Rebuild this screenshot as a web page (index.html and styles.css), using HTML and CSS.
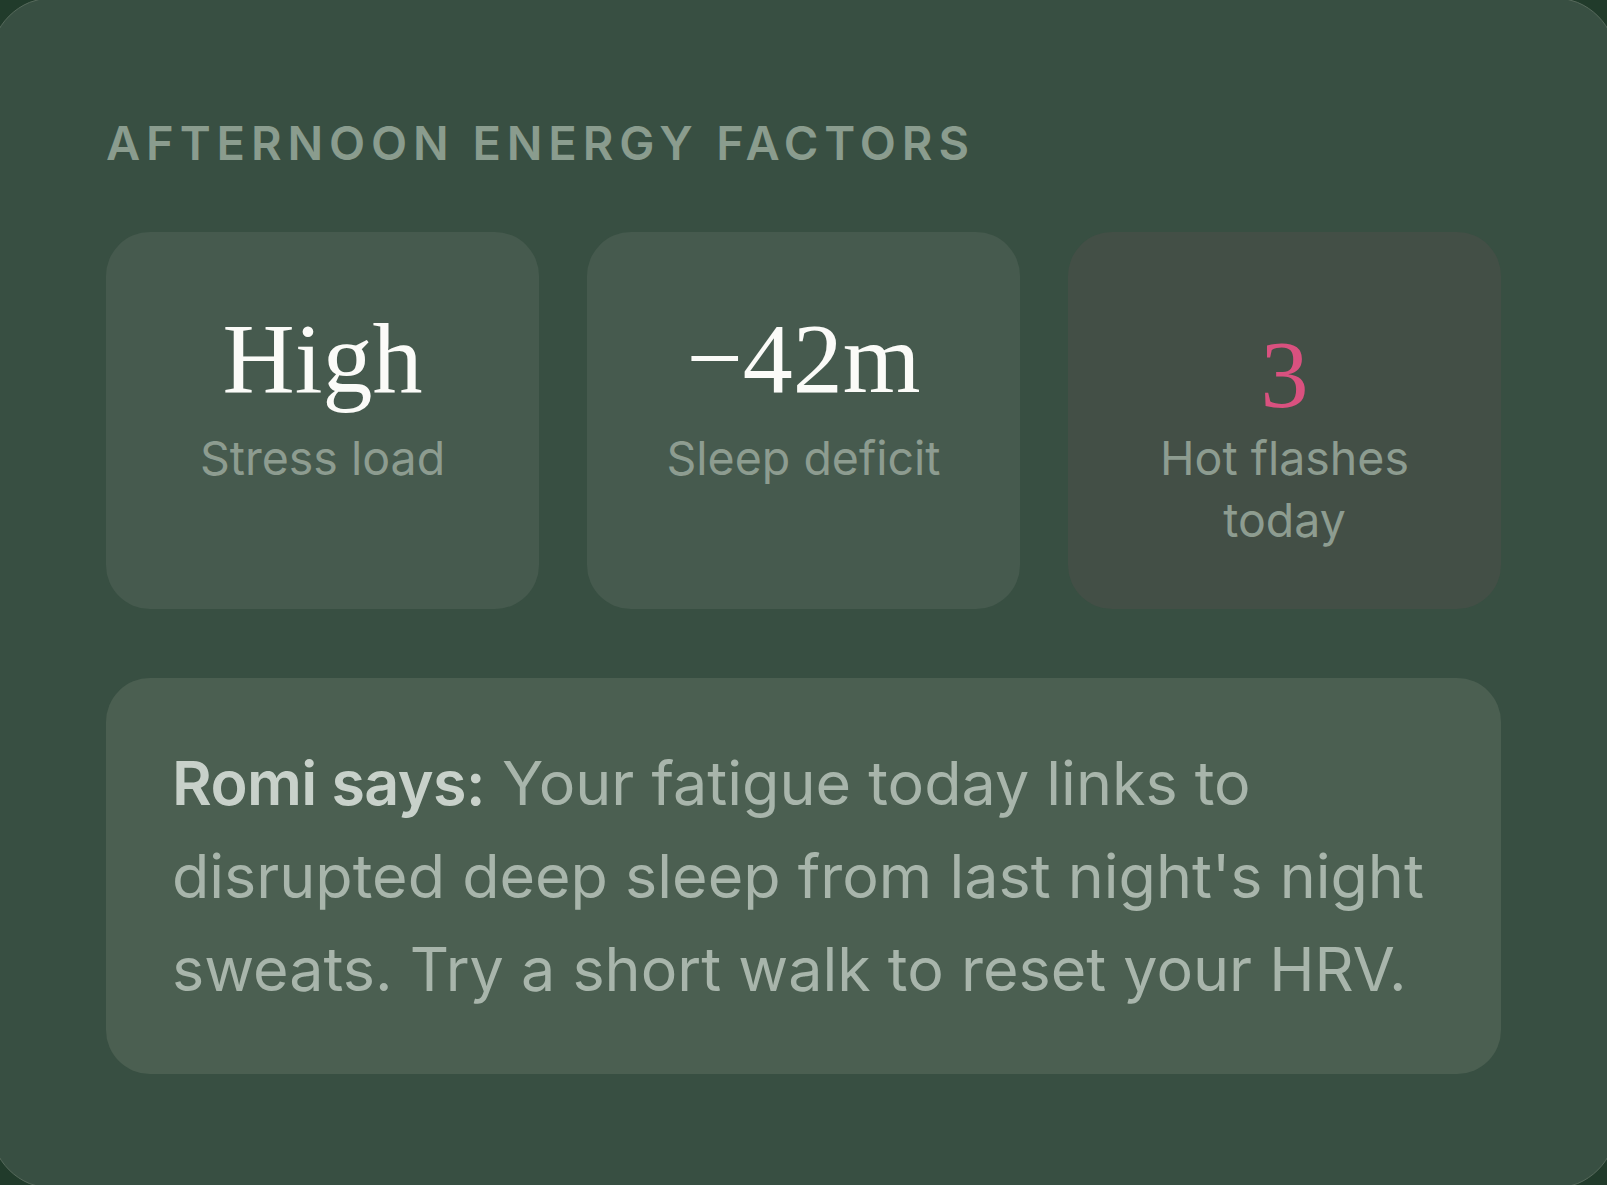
FILE: index.html
```html
<!DOCTYPE html>
<html lang="en">
<head>
<meta charset="utf-8">
<title>Afternoon energy factors</title>
<link rel="stylesheet" href="styles.css">
</head>
<body>
<section class="card">
  <h2 class="eyebrow">AFTERNOON ENERGY FACTORS</h2>
  <div class="tiles">
    <div class="tile">
      <div class="value">High</div>
      <div class="label">Stress load</div>
    </div>
    <div class="tile">
      <div class="value">−42m</div>
      <div class="label">Sleep deficit</div>
    </div>
    <div class="tile tile-warm">
      <div class="value value-pink">3</div>
      <div class="label">Hot flashes today</div>
    </div>
  </div>
  <div class="insight">
    <p><strong>Romi says:</strong> Your fatigue today links to disrupted deep sleep from last night's night sweats. Try a short walk to reset your HRV.</p>
  </div>
</section>
</body>
</html>
```
FILE: styles.css
```css
html, body {
  margin: 0;
  padding: 0;
  overflow: hidden;
  background: #213b2b;
}
body {
  font-family: Inter, "Noto Sans", sans-serif;
}
.card {
  box-sizing: border-box;
  margin: -3px -10px 0;
  height: 1192px;
  padding: 117px 115px 114px;
  background: #384f42;
  border: 1px solid #56695b;
  border-radius: 64px;
}
.eyebrow {
  margin: 0;
  font-size: 47px;
  line-height: 56.4px;
  font-weight: 600;
  letter-spacing: 5.9px;
  color: #8a9c8e;
}
.tiles {
  margin-top: 61px;
  display: grid;
  grid-template-columns: repeat(3, 1fr);
  gap: 48px;
}
.tile {
  box-sizing: border-box;
  background: #465a4e;
  border-radius: 44px;
  padding: 77px 40px 58px;
  text-align: center;
}
.tile-warm {
  background: #434f46;
}
.value {
  font-family: "Liberation Serif", serif;
  font-size: 100px;
  line-height: 100px;
  color: #fbfbf8;
}
.value-pink {
  color: #d9517f;
  font-size: 96px;
  padding-top: 16px;
  margin-bottom: -16px;
}
.label {
  margin-top: 18px;
  font-size: 46.5px;
  line-height: 62px;
  color: #8d9c90;
}
.insight {
  margin-top: 69px;
  background: #4b5f51;
  border-radius: 44px;
  padding: 59px 66px 58px;
}
.insight p {
  margin: 0;
  font-size: 61px;
  line-height: 93px;
  color: #a8b5ab;
}
.insight strong {
  font-weight: 600;
  letter-spacing: -0.6px;
  color: #c8d1ca;
}
```
